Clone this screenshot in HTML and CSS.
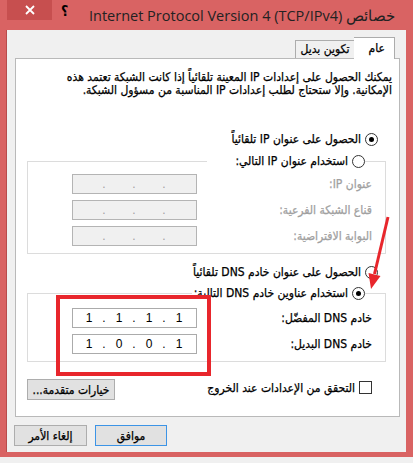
FILE: index.html
```html
<!DOCTYPE html>
<html lang="ar">
<head>
    <meta charset="UTF-8">
    <title>خصائص Internet Protocol Version 4 (TCP/IPv4)</title>
    <link rel="stylesheet" href="styles.css">
</head>
<body>
    <div class="window">
        <div class="titlebar">
            <div class="close-btn">
                <svg width="10" height="10" viewBox="0 0 10 10"><path d="M1 1 L9 9 M9 1 L1 9" stroke="#fff" stroke-width="1.8"/></svg>
            </div>
            <div class="help-btn">؟</div>
            <div class="title" dir="rtl">خصائص <bdi>Internet Protocol Version 4 (TCP/IPv4)</bdi></div>
        </div>

        <div class="client" dir="rtl">
            <div class="tabs">
                <div class="tab active">عام</div>
                <div class="tab">تكوين بديل</div>
            </div>

            <div class="panel">
                <p class="intro">يمكنك الحصول على إعدادات IP المعينة تلقائياً إذا كانت الشبكة تعتمد هذه<br>الإمكانية. وإلا ستحتاج لطلب إعدادات IP المناسبة من مسؤول الشبكة.</p>

                <div class="option"><span class="radio checked"></span>الحصول على عنوان IP تلقائياً</div>

                <fieldset class="group">
                    <legend class="option legend-ip"><span class="radio"></span>استخدام عنوان IP التالي:</legend>
                    <div class="row disabled">
                        <span>عنوان IP:</span>
                        <div class="ip-box" dir="ltr"><span></span><i>.</i><span></span><i>.</i><span></span><i>.</i><span></span></div>
                    </div>
                    <div class="row disabled">
                        <span>قناع الشبكة الفرعية:</span>
                        <div class="ip-box" dir="ltr"><span></span><i>.</i><span></span><i>.</i><span></span><i>.</i><span></span></div>
                    </div>
                    <div class="row disabled">
                        <span>البوابة الافتراضية:</span>
                        <div class="ip-box" dir="ltr"><span></span><i>.</i><span></span><i>.</i><span></span><i>.</i><span></span></div>
                    </div>
                </fieldset>

                <div class="option option-dns"><span class="radio"></span>الحصول على عنوان خادم DNS تلقائياً</div>

                <fieldset class="group group-dns">
                    <legend class="option"><span class="radio checked"></span>استخدام عناوين خادم DNS التالية:</legend>
                    <div class="row">
                        <span>خادم DNS المفضّل:</span>
                        <div class="ip-box" dir="ltr"><span>1</span><i>.</i><span>1</span><i>.</i><span>1</span><i>.</i><span>1</span></div>
                    </div>
                    <div class="row">
                        <span>خادم DNS البديل:</span>
                        <div class="ip-box" dir="ltr"><span>1</span><i>.</i><span>0</span><i>.</i><span>0</span><i>.</i><span>1</span></div>
                    </div>
                </fieldset>

                <div class="footer-row">
                    <div class="check-option"><span class="checkbox"></span>التحقق من الإعدادات عند الخروج</div>
                    <button class="btn btn-advanced">خيارات متقدمة...</button>
                </div>
            </div>

            <div class="actions">
                <button class="btn btn-default">موافق</button>
                <button class="btn">إلغاء الأمر</button>
            </div>
        </div>

        <!-- annotation drawn over the screenshot -->
        <div class="mark-box"></div>
        <svg class="mark-arrow" width="413" height="463" viewBox="0 0 413 463">
            <line x1="388" y1="217" x2="374.5" y2="274" stroke="#e8262c" stroke-width="3"/>
            <polygon points="371,289 380.5,276 368.5,273" fill="#e8262c"/>
        </svg>
    </div>
</body>
</html>
```

FILE: styles.css
```css
body {
    margin: 0;
    background-color: #f0f0f0;
    font-family: "DejaVu Sans", sans-serif;
    font-stretch: condensed;
    font-size: 12px;
    color: #000;
}
.window {
    position: relative;
    width: 413px;
    height: 457px;
    background-color: #d96363;
    overflow: hidden;
}
.titlebar {
    display: flex;
    align-items: flex-start;
    height: 30px;
}
.close-btn {
    width: 45px;
    height: 20px;
    margin-left: 7px;
    background-color: #c74f4f;
    display: flex;
    align-items: center;
    justify-content: center;
}
.help-btn {
    margin-left: 9px;
    margin-top: 3px;
    font-size: 14px;
    font-weight: bold;
    line-height: 16px;
}
.title {
    flex: 1;
    text-align: right;
    padding-right: 18px;
    padding-top: 6px;
    font-family: "Open Sans", sans-serif;
    font-stretch: normal;
    font-size: 14.5px;
    line-height: 20px;
    color: #222;
}
.client {
    margin: 0 7px 0 6px;
    height: 422px;
    box-sizing: border-box;
    background-color: #f0f0f0;
    border-left: 1px solid #b94b4b;
    padding: 7px 6px 0 8px;
    -webkit-text-stroke: 0.25px #000;
}

/* tabs */
.tabs {
    display: flex;
    align-items: flex-end;
    height: 21px;
    padding-right: 5px;
}
.tab {
    height: 18px;
    box-sizing: border-box;
    padding: 0 4px;
    border: 1px solid #acacac;
    border-bottom: none;
    background-color: #f0f0f0;
    line-height: 17px;
    white-space: nowrap;
}
.tab.active {
    position: relative;
    z-index: 1;
    height: 22px;
    margin-bottom: -1px;
    width: 41px;
    padding: 0 9px;
    background-color: #fff;
    border-left: none;
    line-height: 21px;
}
.tab + .tab {
    border-right: none;
    min-width: 59px;
    text-align: center;
}
.panel {
    height: 359px;
    box-sizing: border-box;
    background-color: #fff;
    border: 1px solid #b9b9b9;
    padding-top: 12px;
}
.intro {
    margin: 0;
    padding-right: 7px;
    line-height: 13px;
    white-space: nowrap;
}

/* radios */
.option {
    display: flex;
    align-items: center;
    height: 16px;
    margin: 34px 21px 0 0;
    white-space: nowrap;
}
.radio {
    width: 13px;
    height: 13px;
    box-sizing: border-box;
    border: 1px solid #333;
    border-radius: 50%;
    background-color: #fff;
    margin-left: 4px;
    display: flex;
    align-items: center;
    justify-content: center;
    flex-shrink: 0;
}
.radio.checked::after {
    content: "";
    width: 5px;
    height: 5px;
    border-radius: 50%;
    background-color: #000;
}
.option-dns {
    margin-top: 10px;
}

/* groups */
.group {
    margin: 6px 13px 0 11px;
    padding: 0 13px 7px 44px;
    border: 1px solid #dcdcdc;
    min-width: 0;
}
.group legend.option {
    margin: 0 7px 0 0;
    padding: 0 0 0 2px;
    background-color: #fff;
}
.legend-ip {
    width: 158px;
    box-sizing: border-box;
}
.group-dns {
    margin-top: 5px;
}
.row {
    display: flex;
    justify-content: space-between;
    align-items: center;
    height: 20px;
    margin-top: 6px;
}
.row:first-of-type {
    margin-top: 5px;
}
.group-dns .row:first-of-type {
    margin-top: 7px;
}
.row.disabled {
    color: #a0a0a0;
    -webkit-text-stroke: 0.25px #a0a0a0;
}
.ip-box {
    width: 125px;
    height: 20px;
    box-sizing: border-box;
    border: 1px solid #ababab;
    background-color: #fff;
    display: flex;
    align-items: center;
    padding-left: 4px;
    font-family: "Liberation Sans", sans-serif;
    font-stretch: normal;
    font-size: 12px;
    -webkit-text-stroke: 0;
}
.row.disabled .ip-box {
    background-color: #f0f0f0;
    border-color: #b4b4b4;
}
.ip-box span {
    width: 24px;
    text-align: center;
}
.ip-box i {
    width: 6px;
    font-style: normal;
    text-align: center;
}

/* checkbox + advanced */
.footer-row {
    display: flex;
    justify-content: space-between;
    align-items: flex-start;
    margin: 17px 27px 0 11px;
}
.check-option {
    display: flex;
    align-items: center;
    height: 15px;
    margin-top: 1px;
    white-space: nowrap;
}
.checkbox {
    width: 13px;
    height: 13px;
    box-sizing: border-box;
    border: 1px solid #333;
    background-color: #fff;
    margin-left: 4px;
}

/* buttons */
.btn {
    height: 21px;
    box-sizing: border-box;
    border: 1px solid #adadad;
    background-color: #e1e1e1;
    font-family: "DejaVu Sans", sans-serif;
    font-stretch: condensed;
    font-size: 12px;
    color: #000;
    padding: 0;
    -webkit-text-stroke: 0.25px #000;
}
.btn-advanced {
    width: 88px;
}
.actions {
    display: flex;
    justify-content: flex-end;
    gap: 8px;
    margin: 8px 0 0 -1px;
}
.actions .btn {
    width: 73px;
}
.actions .btn-default {
    width: 72px;
    border-color: #3c94e6;
}

/* annotation */
.mark-box {
    position: absolute;
    left: 56px;
    top: 295px;
    width: 155px;
    height: 81px;
    box-sizing: border-box;
    border: 4px solid #e8262c;
}
.mark-arrow {
    position: absolute;
    left: 0;
    top: 0;
}
```
